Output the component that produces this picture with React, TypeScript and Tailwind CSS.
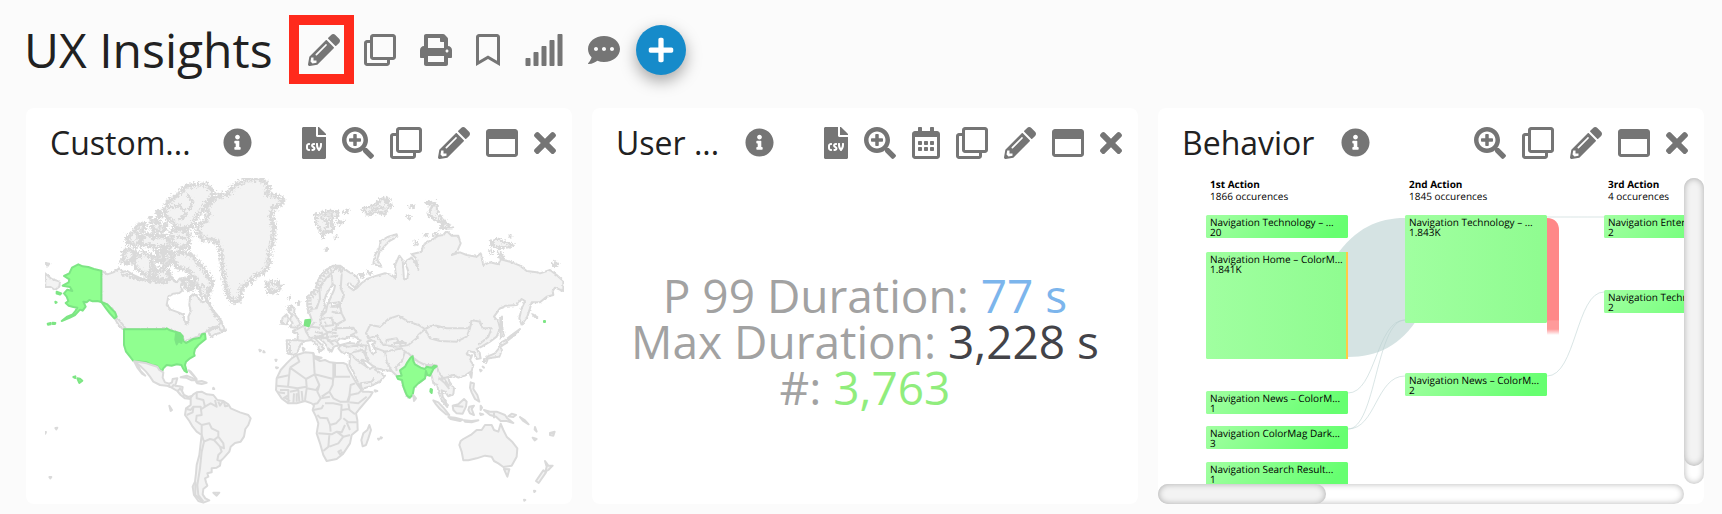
import type { ReactNode } from 'react';
import type { IconType } from 'react-icons';
import {
    FaCommentDots,
    FaFileCsv,
    FaInfoCircle,
    FaPencilAlt,
    FaPlus,
    FaPrint,
    FaRegBookmark,
    FaRegCalendarAlt,
    FaRegClone,
    FaRegWindowMaximize,
    FaSearchPlus,
    FaSignal,
    FaTimes,
} from 'react-icons/fa';

type Action = { label: string; icon: IconType; size: string };

const csv: Action = { label: 'Export CSV', icon: FaFileCsv, size: 'w-6' };
const zoomIn: Action = { label: 'Zoom', icon: FaSearchPlus, size: 'w-8' };
const calendar: Action = { label: 'Date range', icon: FaRegCalendarAlt, size: 'w-7' };
const clone: Action = { label: 'Clone', icon: FaRegClone, size: 'w-8' };
const edit: Action = { label: 'Edit', icon: FaPencilAlt, size: 'w-8' };
const maximize: Action = { label: 'Maximize', icon: FaRegWindowMaximize, size: 'w-8' };
const remove: Action = { label: 'Remove', icon: FaTimes, size: 'w-[22px]' };

const toolbar: Action[] = [
    clone,
    { label: 'Print', icon: FaPrint, size: 'w-8' },
    { label: 'Bookmark', icon: FaRegBookmark, size: 'w-6' },
    { label: 'Statistics', icon: FaSignal, size: 'w-10' },
    { label: 'Comment', icon: FaCommentDots, size: 'w-8' },
];

function IconButton({ action }: { action: Action }) {
    const Icon = action.icon;
    return (
        <button type="button" aria-label={action.label} className="shrink-0 cursor-pointer">
            <Icon className={`h-8 ${action.size}`} />
        </button>
    );
}

type CardProps = { title: string; growTitle?: boolean; actions: Action[]; children: ReactNode };

function Card({ title, growTitle, actions, children }: CardProps) {
    return (
        <section className="flex h-[396px] min-w-0 flex-col overflow-hidden rounded-lg bg-white">
            <header className="flex h-[70px] shrink-0 items-center pr-4 pl-6 text-[#757575]">
                <h2
                    className={`text-[32px] leading-[44px] whitespace-nowrap text-[#212121] ${growTitle ? 'grow' : ''}`}
                >
                    {title}
                </h2>
                <button
                    type="button"
                    aria-label="Info"
                    className={`shrink-0 cursor-pointer pb-[2px] ${growTitle ? '' : 'ml-[27px]'}`}
                >
                    <FaInfoCircle className="size-[29px]" />
                </button>
                <div className="ml-auto flex items-center gap-4 pl-[50px]">
                    {actions.map((action) => (
                        <IconButton key={action.label} action={action} />
                    ))}
                </div>
            </header>
            {children}
        </section>
    );
}

/* ---------- world map ---------- */

// islands and coasts of the far north, drawn with a ragged edge
const arctic = [
    // Greenland
    '582,100 600,90 625,88 640,65 665,48 690,42 725,42 738,55 748,72 735,88 762,90 792,106 775,125 758,130 752,150 762,185 758,230 748,262 746,300 730,322 705,335 690,350 665,368 660,405 648,412 628,402 620,375 612,340 606,300 604,262 592,232 570,222 548,222 535,205 532,182 555,170 565,150 560,125',
    // Ellesmere
    '575,72 580,92 560,115 545,140 528,155 520,180 510,190 470,188 455,170 440,160 432,135 445,112 460,98 480,85 500,65 530,57 560,60',
    '455,195 480,192 508,205 505,245 480,250 462,240 455,220',
    // Banks and Victoria
    '312,255 330,252 345,262 338,280 322,298 308,288 312,270',
    '345,275 375,262 398,275 395,300 412,318 400,338 370,328 345,305 338,290',
    '322,215 345,200 352,182 375,175 372,195 352,212 362,230 345,242 325,232',
    '360,222 385,205 400,215 420,212 445,218 448,245 415,248 385,240 365,240',
    '392,162 410,165 418,180 435,182 430,200 405,195 395,180',
    '412,262 428,260 430,290 412,285',
    '436,258 455,262 448,300 430,305 434,280',
    '416,142 422,145 420,160',
    '395,318 425,312 450,322 448,345 420,345 405,335',
    // Baffin
    '462,265 485,262 515,268 530,290 548,305 560,330 580,352 568,372 565,400 550,395 538,380 545,365 520,362 530,345 512,325 498,312 480,310 465,300 460,282',
    '492,345 505,340 512,358 520,370 505,372 490,362',
    // Iceland
    '738,355 752,352 765,356 780,355 782,368 765,382 742,378 748,366',
];

const northAmerica = [
    // Canada
    '244,317 262,328 280,322 298,310 308,320 322,318 340,330 358,338 380,345 400,340 420,342 440,345 455,335 462,348 470,352 480,340 488,352 480,365 488,376 478,384 460,386 445,395 440,420 452,434 475,442 492,450 492,465 500,478 506,470 505,455 512,440 508,420 510,398 518,388 530,392 540,405 548,412 562,405 570,425 590,448 605,470 600,482 575,488 562,498 552,504 520,520 494,528 488,512 465,498 440,492 318,492 305,478 290,465 285,442 262,418 244,411',
    '565,500 580,490 600,488 612,496 600,504 585,508 572,516',
    '595,482 604,470 616,498 600,494',
    '75,325 95,342 120,350 118,365 105,375 92,366 76,366',
    '76,294 88,296 82,304',
    // Vancouver coast
    '284,460 294,462 306,476 316,490 308,492 294,478',
];

const usa = [
    '148,325 156,308 175,298 188,304 205,306 222,312 244,317 244,411 232,408 218,409 208,405 200,412 190,410 197,425 188,437 180,434 165,450 150,458 125,468 140,456 158,448 166,438 172,428 160,426 146,422 137,414 145,408 140,395 132,385 142,374 157,378 150,366 128,362 146,352 148,343 132,333',
    '244,411 262,418 275,432 285,442 290,455 283,460 270,446 258,430',
    '312,493 435,493 440,490 450,496 465,500 478,504 486,514 490,528 498,534 520,522 540,518 546,508 555,506 557,522 545,532 535,540 525,552 522,565 524,572 510,580 498,590 495,600 501,622 494,618 488,608 484,600 470,598 455,602 440,600 430,610 426,620 418,612 410,602 395,600 380,592 340,588 330,575 318,560 312,540',
    '110,380 124,385 120,389 110,386',
    '106,410 110,412 107,414',
    '83,476 92,474 92,478 84,479',
    '98,473 106,474 105,477 98,477',
    '160,636 166,634 166,639',
    '172,640 180,641 187,647 178,654',
];

const southAmerica = [
    '342,79 380,85 395,90 412,95 418,105 430,112 428,128 435,142 448,146 456,142 458,132 472,130 468,144 465,152 478,154 488,156 486,168 492,180 505,186 518,182 512,192 495,190 482,180 472,168 455,158 440,152 420,150 400,140 390,125 378,110 362,94',
    '344,82 354,92 362,108 376,122 366,116 352,98',
    '482,127 500,122 520,130 530,136 515,136 498,128',
    '528,140 545,138 560,143 545,147 532,145',
    '506,106 512,110 522,122 530,132 516,118',
    '512,188 520,178 530,172 545,170 560,178 580,180 592,195 610,198 625,208 632,220 660,232 685,240 692,250 685,270 676,282 672,305 662,320 645,324 632,335 628,350 612,368 602,378 600,392 590,398 575,400 575,412 562,415 565,425 555,430 558,442 562,452 550,462 548,478 556,490 568,496 550,503 535,498 522,480 518,455 525,440 528,415 530,390 538,360 542,325 545,300 530,290 518,275 508,258 495,240 498,220 512,210',
    '580,473 598,473 590,482',
    '448,212 456,225 452,228',
    '70,292 78,291 76,296',
    '106,279 112,278 109,283',
    '88,426 94,426 91,430',
    '718,44 723,46 720,49',
    '731,48 734,52 730,52',
    '766,74 770,74 768,78',
    '768,97 774,98 770,100',
    '580,158 583,162 579,162',
];

const southAmericaBorders =
    'M545 300L545 270L528 258L530 242L545 240L542 215L520 215L512 225L500 222M500 240L518 232L520 218M530 172L530 190L550 195L555 215L545 222M555 215L572 205L590 215L585 195M595 200L600 212L610 198M612 200L615 214L625 212M545 270L568 265L575 280L595 290L595 305L582 315L570 312L552 320L545 300M582 315L600 335L612 340L610 325L595 305M600 335L605 350L595 360L592 375L602 378M552 320L545 350L540 400L532 450L535 480L550 500M455 158L462 148M472 168L482 160M526 440L526 480L545 498M446 148L450 158M486 168L478 158';

const europeAsia = [
    // Eurasia
    '62,455 52,430 52,395 75,375 85,345 100,320 130,302 150,302 175,320 200,335 208,350 195,368 178,354 170,360 190,376 202,368 215,354 235,340 260,332 285,325 305,330 318,342 315,300 328,272 338,285 342,345 352,340 355,320 345,290 365,278 380,300 385,315 378,280 365,268 395,260 400,238 430,222 445,212 460,210 470,198 485,212 505,212 512,235 500,262 485,270 510,262 530,270 560,275 572,265 580,300 600,292 625,298 632,283 660,290 690,302 710,318 740,322 750,325 780,315 800,330 820,348 820,378 795,368 788,378 790,390 770,395 750,412 725,412 720,430 712,455 695,480 688,460 695,430 705,408 695,402 680,420 650,422 630,430 612,455 625,470 630,490 620,515 600,530 575,545 560,552 568,562 572,580 560,582 552,562 535,558 530,566 545,575 540,585 550,600 545,618 525,632 505,638 490,630 475,636 478,650 492,670 490,688 475,694 465,680 455,676 458,695 470,715 472,726 455,705 445,680 442,660 430,655 425,632 415,615 405,640 385,655 370,670 365,695 355,698 345,680 335,645 320,632 305,618 280,615 258,610 232,590 215,584 230,605 240,612 252,604 255,614 285,632 270,650 240,664 215,672 205,655 190,620 178,600 180,580 178,565 155,562 145,550 152,540 175,534 200,536 212,526 195,515 180,512 165,522 150,520 140,530 148,540 132,545 125,560 115,555 112,545 100,530 85,518 75,520 100,545 100,552 88,562 85,545 65,525 45,528 32,538 22,562 12,570 -8,565 -10,526 22,526 24,508 8,498 22,492 42,482 65,465',
    // Britain and Ireland
    '5,424 14,430 12,445 22,460 32,478 15,488 -2,486 8,475 0,462 6,450 -4,440',
    '-22,458 -10,448 -4,464 -10,478 -26,476',
    // Novaya Zemlya
    '250,295 255,270 268,250 272,228 295,215 320,208 322,215 298,228 285,242 268,262 262,285 275,305 262,302',
    // Sakhalin, Kurils, Japan
    '630,458 636,455 636,485 642,512 632,520 633,490',
    '650,522 665,510 690,492 672,512 655,525',
    '628,535 648,525 652,532 636,542',
    '630,545 636,555 628,575 605,578 588,582 592,575 615,565 625,552',
    '582,582 592,585 588,594 582,590',
    '728,448 742,456 735,456',
];

const arcticIslands = [
    // Svalbard, Franz Josef, Severnaya Zemlya
    '75,150 95,145 110,138 145,140 140,155 120,160 130,185 125,200 105,200 98,216 90,195 80,180',
    '142,172 160,170 150,178',
    '162,142 175,138 168,145',
    '218,132 240,125 262,118 268,105 282,98 288,112 305,122 288,135 285,148 262,142 232,148',
    '292,102 298,103 294,107',
    '360,126 372,120 368,128',
    '352,152 364,158 356,160',
    '408,112 422,114 415,120',
    '416,150 425,125 435,112 442,125 442,145 455,158 452,172 430,160',
    '452,188 465,165 472,180 488,188 470,190',
    '430,210 442,204 440,211',
    '604,230 622,222 645,232 670,240 652,246 625,248 605,240',
    '625,262 635,268 642,278 626,278',
    '788,296 795,290 805,298 794,304',
    '108,252 113,252 110,256',
    '135,216 140,216 137,220',
    '405,206 412,208 405,212',
    '375,228 382,235 378,242',
    '235,320 242,322 238,328',
    '208,328 218,326 216,336',
    '602,258 608,260 604,264',
    '660,213 663,216 659,217',
    // Faroe, Shetland, Hebrides
    '-2,396 1,398 -2,400',
    '23,412 27,414 24,418',
    '-6,426 2,428 -2,436',
];

const europeAsiaBorders =
    'M62 432L80 430L90 400L88 370L108 340L128 320L150 302M100 442L115 410L112 395L128 360L125 330M150 302L155 330L152 370L162 390L155 410M125 425L150 425L150 410M125 440L155 445M150 425L155 445L165 465L140 478L128 470L128 455M92 462L125 458L130 480L95 485L90 462M165 465L140 480L138 490L190 488L200 502L180 512M42 482L48 500L62 485L90 488M48 500L60 520L95 512L120 500L140 490M85 515L110 520L130 540M95 485L110 500L140 505M22 526L42 528M0 532L0 565M228 505L240 480L270 485L295 462L325 452L355 470L385 480L405 492M405 492L430 480L470 490L500 490L540 490L545 465L570 470L578 490L605 490L595 515L565 540M405 492L385 510L380 520L355 540M405 492L420 520L450 528L500 530L530 515L540 490M228 505L235 520L260 512L280 540L320 545L355 540M285 540L290 525L320 520L335 545M230 540L225 560L235 590M230 540L260 550L285 560L290 590L305 618M285 560L310 555L335 550L345 560L335 590L318 605L320 618M345 560L355 565L372 580L385 590L405 600L440 600M180 565L195 560L218 555L235 590M180 565L200 585L230 605M215 672L212 655L245 650L252 640M440 600L445 620L460 640L475 636M445 640L465 645L478 665M150 540L175 545L210 540L232 542M95 500L100 520L118 515M110 500L112 520L125 535M75 500L95 505M105 470L108 485M118 530L140 525M62 485L75 470M120 515L145 512M330 530L350 535M310 535L340 530';

const seas = [
    // Baltic and Caspian
    '92,455 108,440 112,420 132,375 135,362 128,358 108,390 102,410 106,425 96,445',
    '122,425 150,418 148,412 125,415',
    '232,530 240,525 256,530 248,540 258,560 250,568 240,556 238,545',
];

const india = [
    '362,578 368,574 370,588 375,598 392,608 405,612 410,605 425,608 432,602 440,604 430,612 420,632 412,630 408,618 405,640 385,655 372,668 368,690 358,698 350,690 340,665 336,645 324,642 320,634 335,632 330,616 345,605 352,592',
    '422,672 426,674 425,684 421,680',
    '762,468 765,468 765,471 762,471',
];

const southEast = [
    // Africa
    '20,60 45,52 70,54 75,70 90,78 105,75 120,82 140,84 160,84 170,88 175,102 185,120 198,142 212,162 218,170 235,170 248,172 240,185 225,202 208,222 198,235 202,255 203,285 185,300 180,325 170,340 158,358 140,372 110,378 100,360 90,325 80,295 85,265 78,245 68,225 72,212 65,205 45,198 20,205 -5,205 -25,190 -42,165 -40,130 -28,105 -10,85 5,70',
    '238,270 243,285 235,310 228,330 218,334 214,315 220,295 232,285',
    // Australia
    '512,318 520,312 545,298 560,285 575,285 585,270 605,270 612,285 625,290 632,266 640,285 650,305 668,322 682,340 680,365 665,392 640,396 625,385 612,378 605,365 585,362 560,370 535,376 520,376 515,350 508,330',
    '642,402 658,403 652,425',
    '765,378 775,392 788,392 775,405 766,410 770,395',
    '760,406 768,412 746,444 738,438',
    // Indonesia and New Guinea
    '430,196 445,202 462,220 478,240 468,238 450,222 438,208',
    '475,246 495,248 518,254 510,258 482,252',
    '488,212 505,208 522,192 530,200 528,215 518,236 500,235 490,225',
    '538,215 552,212 545,222 552,240 540,235 535,225',
    '522,256 545,258 565,256 545,262 525,260',
    '572,212 576,218 572,225',
    '570,235 580,238 572,240',
    '582,225 600,230 620,230 645,240 652,250 670,264 650,258 632,258 618,245 600,240 590,232',
    '665,236 678,240 670,246 655,244',
    '690,246 705,256 716,268 700,258',
    '735,276 740,290 734,284',
    '728,308 740,312 734,316',
    '780,294 794,290 790,302 780,300',
    // Philippines, Taiwan, Sri Lanka
    '542,142 552,145 550,162 562,180 568,200 555,192 545,172 540,158',
    '540,118 546,112 544,128',
    '370,180 378,190 372,198',
    '570,104 575,106 572,109',
    '578,95 582,98',
    '254,166 262,168 256,170',
    '264,311 268,311 266,314',
    '272,307 276,308 273,311',
    '702,494 706,495 703,497',
    '732,467 736,468 733,471',
    '88,72 75,64 95,68',
    '38,38 44,42 40,48',
];

const africaBorders =
    'M20 60L28 80L0 98M0 98L48 132L74 118L70 54M72 82L74 118L130 132L130 82M135 84L135 125L180 125M0 98L-6 155L-40 152M48 132L50 155L22 160L-6 155M74 118L88 150L78 165L50 160L45 195M88 150L82 170L92 190L82 205L70 208M130 125L128 150L118 170L130 190L150 200L172 200L178 182L182 150L195 145M118 170L95 185M150 200L175 200L180 180L205 175L215 165M178 202L205 205L230 185M105 205L130 205L155 210L152 250L138 265L120 270L112 250L90 248L82 240M155 225L175 222L195 238M160 250L175 262L202 262M85 295L125 298L140 290L155 292L165 270M120 270L122 290M118 300L115 335L100 348M118 335L145 325L160 305L140 290M160 305L180 300M155 345L145 350L150 358L158 350M0 170L25 165L28 200M10 205L12 175M-30 165L-5 165L-5 205M-20 190L-5 180M70 225L95 220L100 210M612 232L612 250M-38 128L0 120M448 130L465 145L478 162M490 212L520 215M20 175L20 200M35 168L38 200M-36 172L-15 175M-15 188L0 198M180 285L170 262M175 205L178 222M92 190L120 185';

function Shapes({ list }: { list: string[] }) {
    return (
        <>
            {list.map((points) => (
                <polygon key={points} points={points} />
            ))}
        </>
    );
}

function WorldMap() {
    return (
        <svg viewBox="78 534 1638 978" className="block w-full" role="img" aria-label="World map">
            <defs>
                <clipPath id="map-area">
                    <rect x="135" y="534" width="1557" height="978" />
                </clipPath>
                <filter id="ragged" x="-5%" y="-5%" width="110%" height="110%">
                    <feTurbulence type="fractalNoise" baseFrequency="0.16" numOctaves="2" seed="4" />
                    <feDisplacementMap in="SourceGraphic" scale="20" xChannelSelector="R" yChannelSelector="G" />
                </filter>
                <filter id="rough" x="-5%" y="-5%" width="110%" height="110%">
                    <feTurbulence type="fractalNoise" baseFrequency="0.12" numOctaves="1" seed="2" />
                    <feDisplacementMap in="SourceGraphic" scale="9" xChannelSelector="R" yChannelSelector="G" />
                </filter>
            </defs>
            <g clipPath="url(#map-area)" fill="#f3f3f3" stroke="#dadada" strokeWidth="6" strokeLinejoin="round">
                <g transform="translate(60 495)">
                    <g filter="url(#rough)">
                        <Shapes list={northAmerica} />
                    </g>
                    <g filter="url(#ragged)" strokeWidth="8">
                        <Shapes list={arctic} />
                        {/* fjords */}
                        <g fill="none" strokeWidth="20" strokeDasharray="5 7">
                            <Shapes list={arctic} />
                        </g>
                        <path
                            d="M445 130L480 120L500 150L475 165M500 90L520 110L505 135M470 215L495 220M300 325L345 340L400 350L440 355M560 405L580 440L600 470"
                            fill="none"
                        />
                    </g>
                    <g fill="#90ff90" stroke="#7de584">
                        <Shapes list={usa} />
                        <polygon points="468,506 480,504 488,514 484,534 476,528 470,538 466,524" fill="#7de584" />
                    </g>
                </g>
                <g transform="translate(60 1005)">
                    <Shapes list={southAmerica} />
                    <path d={southAmericaBorders} fill="none" />
                </g>
                <g transform="translate(870 495)">
                    <g filter="url(#rough)">
                        <Shapes list={europeAsia} />
                        <path d={europeAsiaBorders} fill="none" />
                        <path
                            d="M60 440L56 400L80 378L90 345L106 322L135 306L160 314"
                            fill="none"
                            strokeWidth="16"
                            strokeDasharray="6 4"
                        />
                        <g fill="#ffffff">
                            <Shapes list={seas} />
                        </g>
                    </g>
                    <g filter="url(#ragged)" strokeWidth="9">
                        <Shapes list={arcticIslands} />
                        <path d="M90 155L115 175L105 195M100 150L130 150M240 135L285 125" fill="none" />
                    </g>
                    <g fill="#90ff90" stroke="#7de584">
                        <Shapes list={india} />
                        <polygon points="46,466 60,464 60,474 56,484 44,480" fill="#7de584" />
                    </g>
                </g>
                <g transform="translate(870 1005)">
                    <Shapes list={southEast} />
                    <path d={africaBorders} fill="none" />
                </g>
            </g>
        </svg>
    );
}

/* ---------- metrics ---------- */

const metrics = [
    { label: 'P 99 Duration:', value: '77 s', color: 'text-[#7cb5ec]' },
    { label: 'Max Duration:', value: '3,228 s', color: 'text-[#434348]' },
    { label: '#:', value: '3,763', color: 'text-[#90ed7d]' },
];

function Metrics() {
    return (
        <div className="flex flex-1 flex-col items-center justify-center text-[46px] leading-[46px] text-[#a2a2a2]">
            {metrics.map((metric) => (
                <p key={metric.label}>
                    {metric.label} <span className={metric.color}>{metric.value}</span>
                </p>
            ))}
        </div>
    );
}

/* ---------- behavior flow ---------- */

const columns = [
    { x: 52, title: '1st Action', total: '1866 occurences' },
    { x: 251, title: '2nd Action', total: '1845 occurences' },
    { x: 450, title: '3rd Action', total: '4 occurences' },
];

const nodes = [
    { x: 48, y: 37, h: 23, label: 'Navigation Technology – ...', value: '20' },
    { x: 48, y: 74, h: 107, label: 'Navigation Home – ColorM...', value: '1.841K' },
    { x: 48, y: 213, h: 23, label: 'Navigation News – ColorM...', value: '1' },
    { x: 48, y: 248, h: 23, label: 'Navigation ColorMag Dark...', value: '3' },
    { x: 48, y: 284, h: 23, label: 'Navigation Search Result...', value: '1' },
    { x: 247, y: 37, h: 108, label: 'Navigation Technology – ...', value: '1.843K' },
    { x: 247, y: 195, h: 23, label: 'Navigation News – ColorM...', value: '2' },
    { x: 446, y: 37, h: 23, label: 'Navigation Entertain...', value: '2' },
    { x: 446, y: 112, h: 23, label: 'Navigation Technology – ...', value: '2' },
];

const links = [
    'M190 215C218 215 218 142 247 142',
    'M190 251C218 251 218 142 247 142',
    'M190 251C218 251 218 198 247 198',
    'M389 39C418 39 418 39 446 39',
    'M389 198C418 198 418 114 446 114',
];

function BehaviorFlow() {
    return (
        <div className="grid min-h-0 flex-1 grid-cols-[1fr_20px] grid-rows-[1fr_20px]">
            <div className="overflow-hidden">
                <svg
                    width="600"
                    height="330"
                    textRendering="geometricPrecision"
                    className="block max-w-none"
                    role="img"
                    aria-label="Behavior flow"
                >
                    <defs>
                        <linearGradient id="node" x1="0" y1="0" x2="1" y2="0.15">
                            <stop offset="0" stopColor="#a2ffa2" />
                            <stop offset="1" stopColor="#66ff70" />
                        </linearGradient>
                        <linearGradient id="node-large" x1="0" y1="0" x2="1" y2="0">
                            <stop offset="0" stopColor="#a0ffa0" />
                            <stop offset="1" stopColor="#8ffc90" />
                        </linearGradient>
                        <linearGradient id="exit" x1="0" y1="0" x2="0" y2="1">
                            <stop offset="0" stopColor="#ff8888" />
                            <stop offset="0.87" stopColor="#ff8888" />
                            <stop offset="0.88" stopColor="#ff9a9a" />
                            <stop offset="0.95" stopColor="#ff9a9a" />
                            <stop offset="1" stopColor="#ffffff" />
                        </linearGradient>
                    </defs>
                    <path d="M174 84C194 52 218 40 247 40L262 40L262 137C243 168 219 179 190 179Z" fill="#d5e3e3" />
                    <path d="M389 40C397 40 401 45 401 52V157H389Z" fill="url(#exit)" />
                    {nodes.map((node) => (
                        <g key={`${node.x}-${node.y}`}>
                            <rect
                                x={node.x}
                                y={node.y}
                                width="142"
                                height={node.h}
                                rx="1.5"
                                fill={node.h > 30 ? 'url(#node-large)' : 'url(#node)'}
                            />
                            {node.value === '1.841K' && (
                                <rect x="188" y={node.y} width="2" height={node.h} fill="#ffcc44" />
                            )}
                            <text x={node.x + 4} y={node.y + 11} fontSize="10">
                                {node.label}
                            </text>
                            <text x={node.x + 4} y={node.y + 21} fontSize="10">
                                {node.value}
                            </text>
                        </g>
                    ))}
                    <g fill="none" stroke="#b9cfcf" strokeOpacity="0.55">
                        {links.map((d) => (
                            <path key={d} d={d} />
                        ))}
                    </g>
                    {columns.map((column) => (
                        <g key={column.x} fontSize="10">
                            <text x={column.x} y="10" fontWeight="700">
                                {column.title}
                            </text>
                            <text x={column.x} y="22">
                                {column.total}
                            </text>
                        </g>
                    ))}
                </svg>
            </div>
            <div className="rounded-full bg-white shadow-[inset_0_0_6px_rgba(0,0,0,0.3)]">
                <div className="h-[94%] rounded-full bg-[#f3f3f3] shadow-[inset_0_0_6px_rgba(0,0,0,0.3)]" />
            </div>
            <div className="rounded-full bg-white shadow-[inset_0_0_6px_rgba(0,0,0,0.3)]">
                <div className="h-full w-[32%] rounded-full bg-[#f3f3f3] shadow-[inset_0_0_6px_rgba(0,0,0,0.3)]" />
            </div>
        </div>
    );
}

export default function App() {
    return (
        <main className="min-h-screen bg-[#fbfbfb] pr-[18px] pb-[10px] pl-[26px] font-['Open_Sans',sans-serif]">
            <header className="-ml-[2px] mb-2 flex h-[100px] items-center gap-6 text-[#757575]">
                <h1 className="mr-[11px] text-[48px] leading-[66px] text-[#212121]">UX Insights</h1>
                <div className="relative flex">
                    <IconButton action={edit} />
                    <span className="pointer-events-none absolute -top-[19px] -right-[14px] -bottom-[18px] -left-[19px] border-[10px] border-[#ff2a1c]" />
                </div>
                {toolbar.map((action) => (
                    <IconButton key={action.label} action={action} />
                ))}
                <button
                    type="button"
                    aria-label="Add"
                    className="-ml-2 flex size-[50px] cursor-pointer items-center justify-center rounded-full bg-[#168bca] text-white shadow-[0_6px_16px_rgba(0,0,0,0.35)]"
                >
                    <FaPlus className="size-7" />
                </button>
            </header>

            <div className="grid grid-cols-3 gap-5">
                <Card title="Custom..." growTitle actions={[csv, zoomIn, clone, edit, maximize, remove]}>
                    <WorldMap />
                </Card>
                <Card title="User ..." growTitle actions={[csv, zoomIn, calendar, clone, edit, maximize, remove]}>
                    <Metrics />
                </Card>
                <Card title="Behavior" actions={[zoomIn, clone, edit, maximize, remove]}>
                    <BehaviorFlow />
                </Card>
            </div>
        </main>
    );
}
